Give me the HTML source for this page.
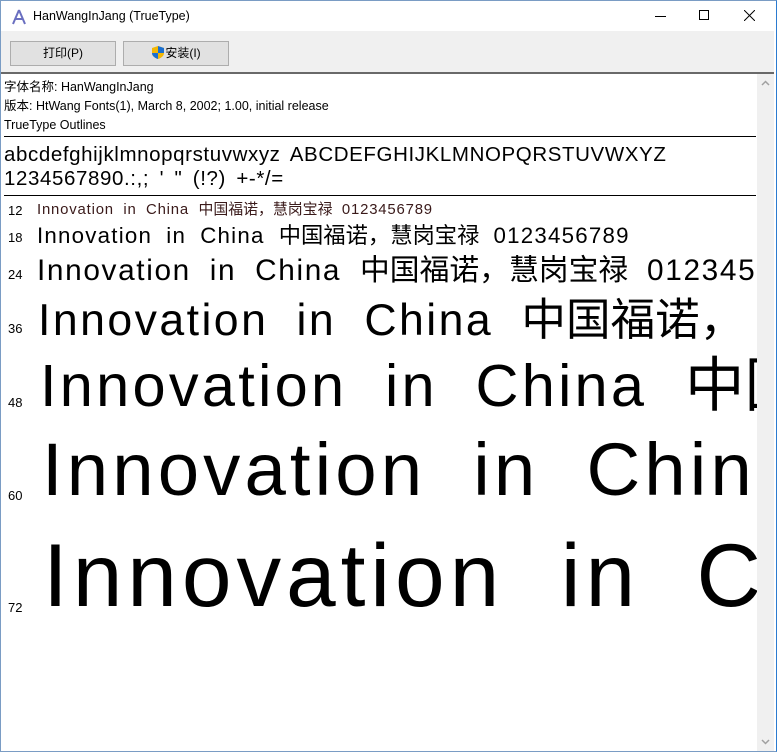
<!DOCTYPE html>
<html><head><meta charset="utf-8"><style>
*{margin:0;padding:0;box-sizing:border-box}
body{width:777px;height:752px;overflow:hidden;background:#fff;position:relative;font-family:"Liberation Sans","Noto Sans CJK SC",sans-serif;color:#000}
.a{position:absolute;white-space:nowrap}
.btn{position:absolute;top:41px;height:25px;background:#e1e1e1;border:1px solid #adadad;font-size:12px;text-align:center;line-height:23px}
.s{position:absolute;white-space:nowrap;line-height:1;letter-spacing:0.055em;word-spacing:0.3em}
.s i{font-style:normal;font-family:"Noto Sans CJK SC",sans-serif;font-size:1em;letter-spacing:0}
.l{position:absolute;left:4px;font-size:13px;line-height:1}
</style></head><body>
<div class="a" style="left:0;top:0;width:777px;height:752px;border:1px solid #7a9cc4;border-right-color:#2b7bd0"></div>
<svg class="a" style="left:11px;top:9px" width="16" height="16" viewBox="0 0 16 16"><path d="M8 1 L2 15 M8 1 L14 15 M4 10 H12" stroke="#6a6fc0" stroke-width="2" fill="none"/></svg>
<div class="a" style="left:33px;top:9px;font-size:12.5px">HanWangInJang (TrueType)</div>
<div class="a" style="left:655px;top:16px;width:11px;height:1px;background:#000"></div>
<div class="a" style="left:699px;top:10px;width:10px;height:10px;border:1px solid #000"></div>
<svg class="a" style="left:744px;top:10px" width="11" height="11"><path d="M0 0L11 11M11 0L0 11" stroke="#000"/></svg>
<div class="a" style="left:1px;top:31px;width:773px;height:41px;background:#f0f0f0"></div>
<div class="btn" style="left:10px;width:106px">打印(P)</div>
<div class="btn" style="left:123px;width:106px"><svg width="14" height="15" viewBox="0 0 14 15" style="vertical-align:-3px"><path d="M7 1 L13 3 V8 C13 11 10 13 7 14 C4 13 1 11 1 8 V3Z" fill="#f2b705"/><path d="M7 1 L13 3 V8 H7Z M7 8 V14 C4 13 1 11 1 8Z" fill="#1a6fd0"/></svg>安装(I)</div>
<div class="a" style="left:1px;top:72px;width:773px;height:2px;background:#696969"></div>
<div class="a" style="left:757px;top:74px;width:17px;height:677px;background:#f0f0f0"></div>
<svg class="a" style="left:761px;top:80px" width="9" height="6"><path d="M1 5L4.5 1.5L8 5" stroke="#a0a0a0" fill="none" stroke-width="1.5"/></svg>
<svg class="a" style="left:761px;top:739px" width="9" height="6"><path d="M1 1L4.5 4.5L8 1" stroke="#a0a0a0" fill="none" stroke-width="1.5"/></svg>
<div class="a" style="left:4px;top:78px;font-size:12.5px;line-height:19px">字体名称: HanWangInJang<br>版本: HtWang Fonts(1), March 8, 2002; 1.00, initial release<br>TrueType Outlines</div>
<div class="a" style="left:4px;top:136px;width:752px;height:1px;background:#000"></div>
<div class="a" style="left:4px;top:143px;font-size:20.5px;line-height:24px;letter-spacing:0.6px;word-spacing:0.2em">abcdefghijklmnopqrstuvwxyz ABCDEFGHIJKLMNOPQRSTUVWXYZ<br>1234567890.:,; ' " (!?) +-*/=</div>
<div class="a" style="left:4px;top:195px;width:752px;height:1px;background:#000"></div>
<div class="a" style="left:4px;top:196px;width:753px;height:556px;overflow:hidden">
<div class="l" style="top:8px">12</div><div class="s" style="top:6px;left:33px;font-size:14.9px;color:#3a1a1a">Innovation in China <i>中国福诺，慧岗宝禄</i> 0123456789</div>
<div class="l" style="top:35px">18</div><div class="s" style="top:27px;left:33px;font-size:22.3px">Innovation in China <i>中国福诺，慧岗宝禄</i> 0123456789</div>
<div class="l" style="top:72px">24</div><div class="s" style="top:57px;left:33px;font-size:29.8px">Innovation in China <i>中国福诺，慧岗宝禄</i> 0123456789</div>
<div class="l" style="top:126px">36</div><div class="s" style="top:98px;left:34px;font-size:44.6px">Innovation in China <i>中国福诺，</i></div>
<div class="l" style="top:200px">48</div><div class="s" style="top:156px;left:36px;font-size:59.5px">Innovation in China <i>中国</i></div>
<div class="l" style="top:293px">60</div><div class="s" style="top:237px;left:38px;font-size:74.4px">Innovation in China</div>
<div class="l" style="top:405px">72</div><div class="s" style="top:335px;left:39px;font-size:89.3px">Innovation in China</div>
</div>
</body></html>
